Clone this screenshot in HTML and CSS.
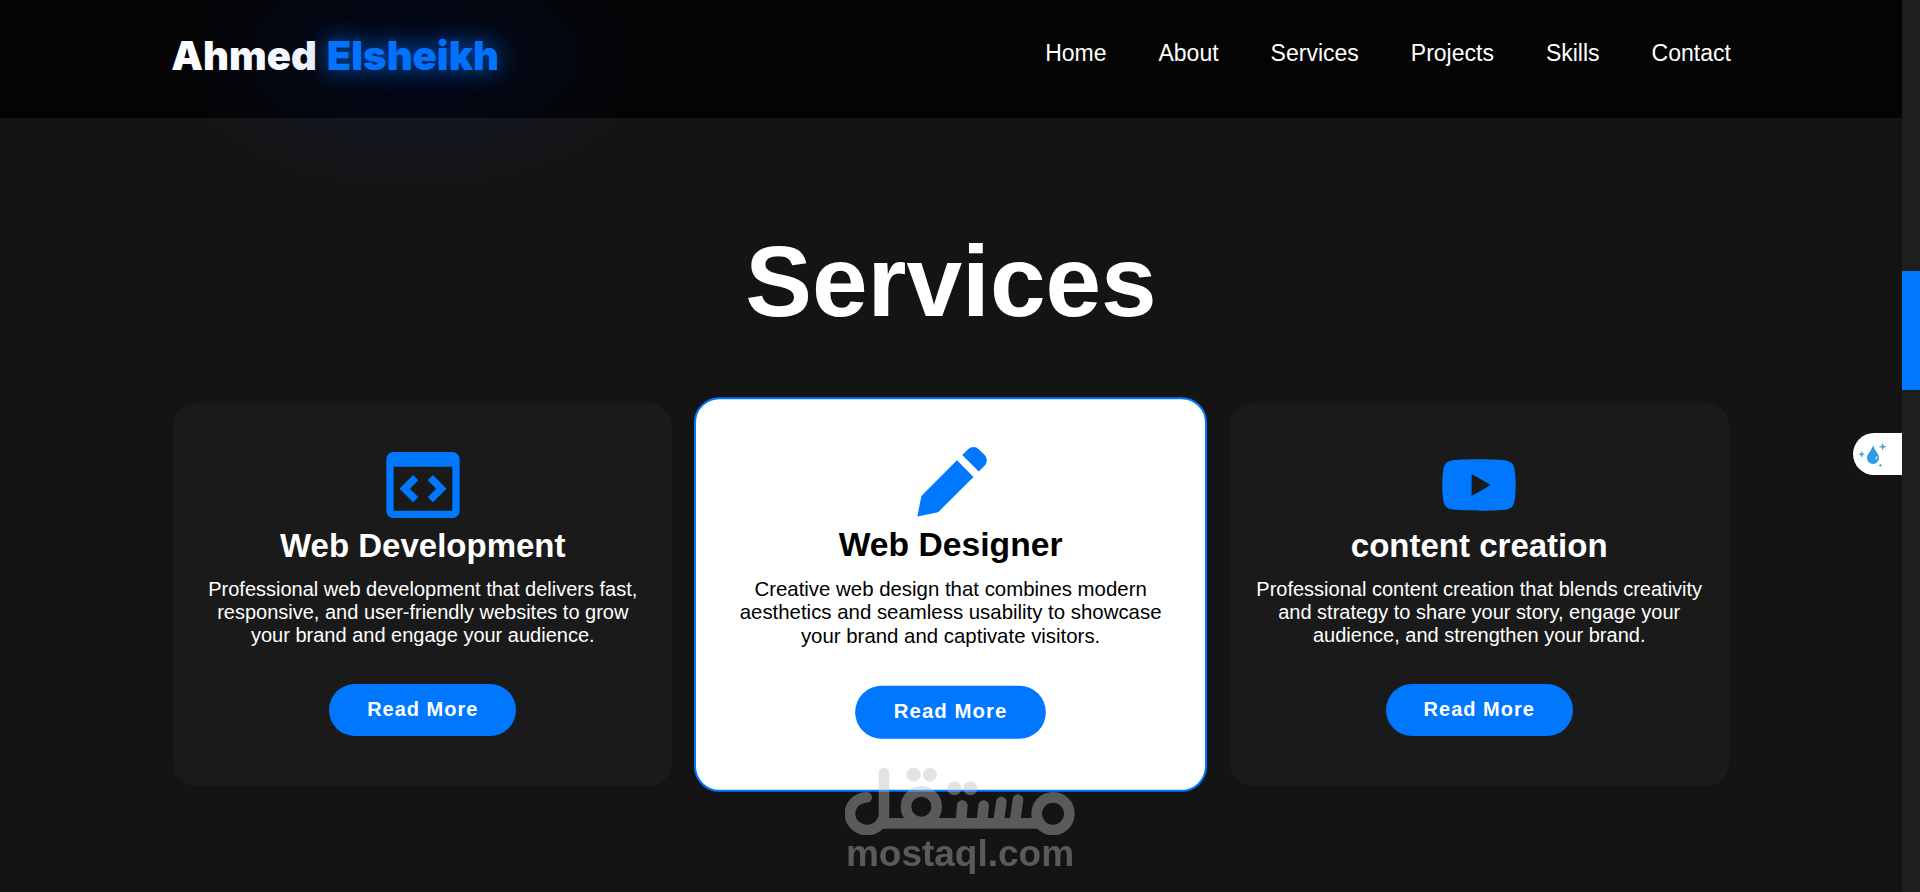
FILE: index.html
```html
<!DOCTYPE html>
<html lang="en">
<head>
<meta charset="utf-8">
<meta name="viewport" content="width=device-width, initial-scale=1">
<title>Ahmed Elsheikh – Services</title>
<link rel="stylesheet" href="styles.css">
</head>
<body>
<div class="page">
  <header class="header">
    <a class="logo" href="#home"><span>Ahmed</span> <span class="logo-accent">Elsheikh</span></a>
    <nav class="nav">
      <a href="#home">Home</a>
      <a href="#about">About</a>
      <a href="#services">Services</a>
      <a href="#projects">Projects</a>
      <a href="#skills">Skills</a>
      <a href="#contact">Contact</a>
    </nav>
  </header>

  <main class="services" id="services">
    <h1 class="heading">Services</h1>
    <div class="cards">
      <article class="card">
        <svg class="icon" viewBox="0 0 24 24" aria-hidden="true"><path d="M20 3H4c-1.103 0-2 .897-2 2v14c0 1.103.897 2 2 2h16c1.103 0 2-.897 2-2V5c0-1.103-.897-2-2-2zM4 19V7h16v12z"/><path d="M9.293 9.293 5.586 13l3.707 3.707 1.414-1.414L8.414 13l2.293-2.293zm5.414 0-1.414 1.414L15.586 13l-2.293 2.293 1.414 1.414L18.414 13z"/></svg>
        <h2 class="title">Web Development</h2>
        <p class="text">Professional web development that delivers fast, responsive, and user-friendly websites to grow your brand and engage your audience.</p>
        <a class="button" href="#web-development">Read More</a>
      </article>
      <article class="card card-active">
        <svg class="icon" viewBox="0 0 24 24" aria-hidden="true"><path d="M8.707 19.707 18 10.414 13.586 6l-9.293 9.293a1.003 1.003 0 0 0-.263.464L3 21l5.242-1.03c.176-.044.337-.135.465-.263zM21 7.414a2 2 0 0 0 0-2.828L19.414 3a2 2 0 0 0-2.828 0L15 4.586 19.414 9 21 7.414z"/></svg>
        <h2 class="title">Web Designer</h2>
        <p class="text">Creative web design that combines modern aesthetics and seamless usability to showcase your brand and captivate visitors.</p>
        <a class="button" href="#web-designer">Read More</a>
      </article>
      <article class="card">
        <svg class="icon" viewBox="0 0 24 24" aria-hidden="true"><path d="M21.593 7.203a2.506 2.506 0 0 0-1.762-1.766C18.265 5.007 12 5 12 5s-6.264-.007-7.831.404a2.56 2.56 0 0 0-1.766 1.778c-.413 1.566-.417 4.814-.417 4.814s-.004 3.264.406 4.814c.23.857.905 1.534 1.763 1.765 1.582.43 7.83.437 7.83.437s6.265.007 7.831-.403a2.515 2.515 0 0 0 1.767-1.763c.414-1.565.417-4.812.417-4.812s.02-3.265-.407-4.831zM9.996 15.005l.005-6 5.207 3.005-5.212 2.995z"/></svg>
        <h2 class="title">content creation</h2>
        <p class="text">Professional content creation that blends creativity and strategy to share your story, engage your audience, and strengthen your brand.</p>
        <a class="button" href="#content-creation">Read More</a>
      </article>
    </div>
  </main>
</div>

<div class="scrollbar" aria-hidden="true"><div class="thumb"></div></div>

<button class="widget" type="button" aria-label="Color assistant">
  <svg class="widget-icon" viewBox="0 0 90 90" aria-hidden="true">
    <path d="M45 18C43 34 27 43 27 57a18 18 0 0 0 36 0C63 43 50 36 45 18z" fill="#2b9be6"/>
    <path d="M58 50q2 8-5 13q-2-8 5-13z" fill="#fff"/>
    <path d="M74 11l3 9 9 3-9 3-3 9-3-9-9-3 9-3z" fill="#3fa7e6"/>
    <path d="M11 36l3 7 7 3-7 3-3 7-3-7-7-3 7-3z" fill="#3fa7e6"/>
    <path d="M67 73l2 4 4 2-4 2-2 4-2-4-4-2 4-2z" fill="#3fa7e6"/>
  </svg>
</button>

<div class="watermark">
  <svg class="watermark-mark" viewBox="45 55 690 201" role="img" aria-label="مستقل">
    <g fill="none" stroke="#bcbcbc" stroke-width="32" stroke-linecap="round">
      <path d="M162 70V191A51 49 0 1 1 110 143"/>
      <path d="M150 221H640" stroke-linecap="butt"/>
      <circle cx="274" cy="171" r="46"/>
      <path d="M397 168L393 215M461 168L456 215M514 157L506 215M564 150L555 215"/>
      <circle cx="669" cy="192" r="49"/>
    </g>
    <g fill="#bcbcbc">
      <circle cx="251" cy="75" r="21"/><circle cx="300" cy="75" r="21"/>
      <circle cx="373" cy="116" r="21"/><circle cx="421" cy="116" r="21"/>
    </g>
  </svg>
  <span>mostaql.com</span>
</div>
</body>
</html>
```
FILE: styles.css
```css
* {
  box-sizing: border-box;
  margin: 0;
  padding: 0;
}

body {
  min-height: 100vh;
  background: #141414;
  color: #fff;
  font-family: "Liberation Sans", Arial, sans-serif;
  overflow: hidden;
}

a {
  color: inherit;
  text-decoration: none;
}

.page {
  margin-right: 18px;
}

.header {
  display: flex;
  justify-content: space-between;
  align-items: flex-start;
  padding: 30px 9% 36px;
  background: #040404;
}

.logo {
  display: flex;
  gap: 10px;
  font: 900 40px/52px Inter, "Arial Black", sans-serif;
}

.logo-accent {
  position: relative;
  color: #0077ff;
  text-shadow: 0 0 25px rgba(0, 119, 255, 0.9);
}

/* wide, faint halo around the accent word */
.logo-accent::after {
  content: "";
  position: absolute;
  inset: -110px -160px;
  background: radial-gradient(closest-side, rgba(10, 60, 255, 0.09), rgba(10, 60, 255, 0.05) 50%, rgba(10, 60, 255, 0));
  pointer-events: none;
}

.nav {
  display: flex;
  gap: 52px;
  font-size: 23px;
  line-height: 46px;
}

.services {
  padding: 106px 9% 100px;
}

.heading {
  font-size: 100px;
  line-height: 115px;
  text-align: center;
  margin-bottom: 62px;
}

.cards {
  display: grid;
  grid-template-columns: repeat(3, 1fr);
  gap: 25px;
}

.card {
  display: flex;
  flex-direction: column;
  align-items: center;
  padding: 38px 25px 50px;
  border: 2px solid #141414;
  border-radius: 25px;
  background: #1a1a1a;
  text-align: center;
}

.card-active {
  background: #fff;
  border-color: #0077ff;
  color: #000;
  transform: scale(1.02);
}

.icon {
  width: 88px;
  height: 88px;
  fill: #0077ff;
}

.title {
  font-size: 33px;
  line-height: 34px;
  margin-bottom: 15px;
}

.text {
  font-size: 20px;
  line-height: 23px;
  margin-bottom: 37px;
}

.button {
  padding: 14px 38px 15px;
  border-radius: 26px;
  background: #0077ff;
  color: #fff;
  font-size: 20px;
  font-weight: 700;
  line-height: 23px;
  letter-spacing: 1px;
}

.scrollbar {
  position: fixed;
  top: 0;
  right: 0;
  bottom: 0;
  width: 18px;
  padding-top: 271px;
  background: #1e1e1e;
}

.thumb {
  height: 119px;
  background: #0077ff;
}

.widget {
  position: fixed;
  top: 433px;
  right: 18px;
  display: flex;
  align-items: center;
  width: 49px;
  height: 42px;
  padding-left: 5px;
  border: 0;
  border-radius: 21px 0 0 21px;
  background: #fff;
}

.widget-icon {
  width: 30px;
  height: 30px;
}

.watermark {
  position: fixed;
  left: 50%;
  bottom: 19px;
  display: flex;
  flex-direction: column;
  align-items: center;
  width: 230px;
  transform: translateX(-50%);
  color: #bcbcbc;
  font-size: 37px;
  font-weight: 700;
  line-height: 38px;
  opacity: 0.42;
}

.watermark-mark {
  width: 230px;
  height: 67px;
}
```
